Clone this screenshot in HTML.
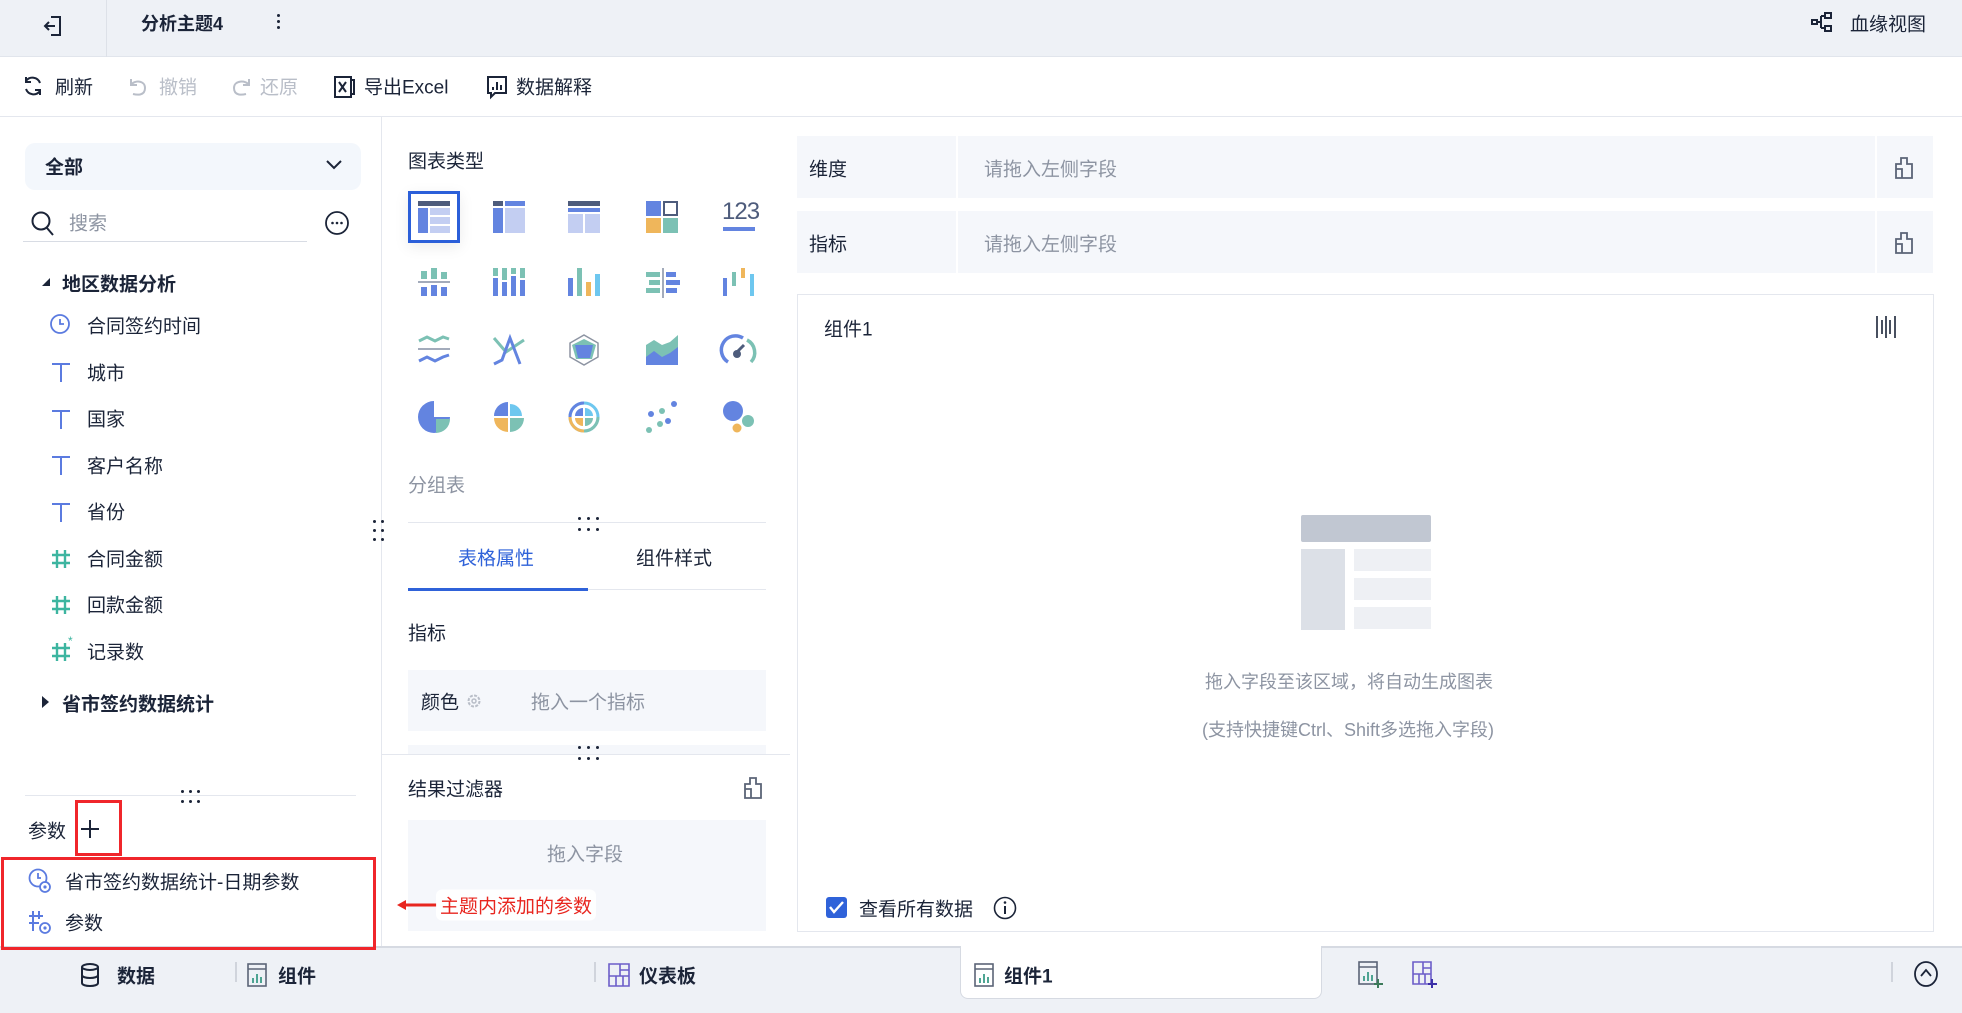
<!DOCTYPE html>
<html><head><meta charset="utf-8"><style>
*{margin:0;padding:0;box-sizing:border-box}
body{width:1962px;height:1013px;position:relative;overflow:hidden;background:#fff;font-family:"Liberation Sans","Noto Sans CJK SC",sans-serif;color:#1b2438;font-size:19px}
.a{position:absolute;white-space:nowrap}
.c{transform:translateY(-50%)}
svg{position:absolute;overflow:visible}
.g{color:#8d94a2}
</style></head><body>
<!-- top bar -->
<div class="a" style="left:0;top:0;width:1962px;height:57px;background:#eef1f6;border-bottom:1px solid #e1e5ec"></div>
<div class="a" style="left:106px;top:0;width:1px;height:57px;background:#dde1e8"></div>
<svg style="left:42px;top:14px" width="22" height="24" viewBox="0 0 22 24"><path d="M9 3h9v18H9M13 12H3M7 8l-4 4 4 4" fill="none" stroke="#1b2438" stroke-width="2"/></svg>
<div class="a c" style="left:141px;top:23px;font-weight:bold;font-size:18px">分析主题4</div>
<div class="a" style="left:277px;top:14px;width:3px;height:3px;background:#1b2438;border-radius:50%;box-shadow:0 6px 0 #1b2438,0 12px 0 #1b2438"></div>
<svg style="left:1811px;top:12px" width="22" height="20" viewBox="0 0 22 20"><rect x="1" y="8" width="5" height="4" fill="none" stroke="#1b2438" stroke-width="2"/><rect x="14" y="1" width="6" height="5" fill="none" stroke="#1b2438" stroke-width="2"/><rect x="14" y="14" width="6" height="5" fill="none" stroke="#1b2438" stroke-width="2"/><path d="M6 10h4M10 4v12M10 4h4M10 16h4" fill="none" stroke="#1b2438" stroke-width="2"/></svg>
<div class="a c" style="left:1850px;top:23px">血缘视图</div>
<!-- toolbar -->
<div class="a" style="left:0;top:116px;width:1962px;height:1px;background:#e4e7ee"></div>
<svg style="left:22px;top:75px" width="22" height="22" viewBox="0 0 22 22"><path d="M18 8a8 8 0 0 0-14-2M4 14a8 8 0 0 0 14 2M4 2v5h5M18 20v-5h-5" fill="none" stroke="#1b2438" stroke-width="2"/></svg>
<div class="a c" style="left:55px;top:86px">刷新</div>
<svg style="left:128px;top:76px" width="22" height="22" viewBox="0 0 22 22"><path d="M3 3v6h6M3 9c3-5 14-5 14 3s-8 7-12 6" fill="none" stroke="#b9bec8" stroke-width="2"/></svg>
<div class="a c g" style="left:159px;top:86px;color:#b9bec8">撤销</div>
<svg style="left:230px;top:76px" width="22" height="22" viewBox="0 0 22 22"><path d="M19 3v6h-6M19 9C16 4 4 4 4 12s8 7 12 6" fill="none" stroke="#b9bec8" stroke-width="2"/></svg>
<div class="a c" style="left:260px;top:86px;color:#b9bec8">还原</div>
<svg style="left:334px;top:75px" width="22" height="24" viewBox="0 0 22 24"><path d="M1 2h16v20H1zM17 5h3v14h-3M5 7l7 10M12 7l-7 10" fill="none" stroke="#1b2438" stroke-width="2"/></svg>
<div class="a c" style="left:364px;top:86px">导出Excel</div>
<svg style="left:486px;top:75px" width="22" height="24" viewBox="0 0 22 24"><path d="M2 2h18v16H9l-4 4v-4H2zM7 12v3M11 7v8M15 10v5" fill="none" stroke="#1b2438" stroke-width="2"/></svg>
<div class="a c" style="left:516px;top:86px">数据解释</div>
<!-- left panel -->
<div class="a" style="left:381px;top:117px;width:1px;height:829px;background:#e4e7ee"></div>
<div class="a" style="left:25px;top:143px;width:336px;height:47px;background:#f3f7fc;border-radius:10px"></div>
<div class="a c" style="left:45px;top:166px;font-weight:bold">全部</div>
<svg style="left:326px;top:160px" width="16" height="10" viewBox="0 0 16 10"><path d="M1 1l7 7 7-7" fill="none" stroke="#1b2438" stroke-width="2"/></svg>
<svg style="left:31px;top:211px" width="24" height="26" viewBox="0 0 24 26"><circle cx="10" cy="10" r="8.5" fill="none" stroke="#1b2438" stroke-width="2"/><path d="M16 17l6 7" stroke="#1b2438" stroke-width="2"/></svg>
<div class="a c g" style="left:69px;top:222px">搜索</div>
<div class="a" style="left:23px;top:241px;width:284px;height:1px;background:#d8dce4"></div>
<svg style="left:325px;top:211px" width="24" height="24" viewBox="0 0 24 24"><circle cx="12" cy="12" r="11" fill="none" stroke="#1b2438" stroke-width="1.8"/><circle cx="7.5" cy="12" r="1.3" fill="#1b2438"/><circle cx="12" cy="12" r="1.3" fill="#1b2438"/><circle cx="16.5" cy="12" r="1.3" fill="#1b2438"/></svg>
<svg style="left:41px;top:277px" width="10" height="10"><path d="M9 1v8H1z" fill="#1b2438"/></svg>
<div class="a c" style="left:62px;top:283px;font-weight:bold">地区数据分析</div>
<svg style="left:50px;top:314px" width="20" height="20" viewBox="0 0 20 20"><circle cx="10" cy="10" r="9" fill="none" stroke="#5b7be0" stroke-width="1.8"/><path d="M10 5v5h4" fill="none" stroke="#5b7be0" stroke-width="1.8"/></svg>
<div class="a c" style="left:87px;top:325px">合同签约时间</div>
<svg style="left:51px;top:362px;" width="20" height="20" viewBox="0 0 20 20"><path d="M1 2h18M10 2v18" stroke="#5b7be0" stroke-width="2"/></svg>
<div class="a c" style="left:87px;top:372px">城市</div>
<svg style="left:51px;top:409px;" width="20" height="20" viewBox="0 0 20 20"><path d="M1 2h18M10 2v18" stroke="#5b7be0" stroke-width="2"/></svg>
<div class="a c" style="left:87px;top:418px">国家</div>
<svg style="left:51px;top:455px;" width="20" height="20" viewBox="0 0 20 20"><path d="M1 2h18M10 2v18" stroke="#5b7be0" stroke-width="2"/></svg>
<div class="a c" style="left:87px;top:465px">客户名称</div>
<svg style="left:51px;top:502px;" width="20" height="20" viewBox="0 0 20 20"><path d="M1 2h18M10 2v18" stroke="#5b7be0" stroke-width="2"/></svg>
<div class="a c" style="left:87px;top:511px">省份</div>
<svg style="left:51px;top:549px" width="20" height="20" viewBox="0 0 20 20"><path d="M1 6h18M1 14h18M6 1v18M14 1v18" stroke="#3db5a0" stroke-width="2.4"/></svg>
<div class="a c" style="left:87px;top:558px">合同金额</div>
<svg style="left:51px;top:595px" width="20" height="20" viewBox="0 0 20 20"><path d="M1 6h18M1 14h18M6 1v18M14 1v18" stroke="#3db5a0" stroke-width="2.4"/></svg>
<div class="a c" style="left:87px;top:604px">回款金额</div>
<svg style="left:51px;top:642px" width="20" height="20" viewBox="0 0 20 20"><path d="M1 6h18M1 14h18M6 1v18M14 1v18" stroke="#3db5a0" stroke-width="2.4"/></svg>
<div class="a" style="left:68px;top:634px;font-size:12px;color:#3db5a0">*</div>
<div class="a c" style="left:87px;top:651px">记录数</div>
<svg style="left:41px;top:695px" width="10" height="14"><path d="M1 1l7 6-7 6z" fill="#1b2438"/></svg>
<div class="a c" style="left:62px;top:703px;font-weight:bold">省市签约数据统计</div>
<div class="a" style="left:25px;top:795px;width:331px;height:1px;background:#e4e7ee"></div>
<div class="a" style="left:181px;top:790px;width:3px;height:3px;background:#1b2438;border-radius:50%;box-shadow:8px 0 #1b2438,16px 0 #1b2438,0 10px #1b2438,8px 10px #1b2438,16px 10px #1b2438"></div>
<div class="a" style="left:373px;top:520px;width:3px;height:3px;background:#1b2438;border-radius:50%;box-shadow:8px 0 #1b2438,0 9px #1b2438,8px 9px #1b2438,0 18px #1b2438,8px 18px #1b2438"></div>
<div class="a c" style="left:28px;top:830px">参数</div>
<svg style="left:81px;top:820px" width="18" height="18"><path d="M9 0v18M0 9h18" stroke="#1b2438" stroke-width="2"/></svg>
<svg style="left:28px;top:868px" width="24" height="26" viewBox="0 0 24 26"><circle cx="10" cy="10" r="8.5" fill="none" stroke="#5b7be0" stroke-width="1.8"/><path d="M10 5v5h3" fill="none" stroke="#5b7be0" stroke-width="1.8"/><circle cx="17" cy="19" r="5" fill="#fff" stroke="#5b7be0" stroke-width="1.8"/><circle cx="17" cy="19" r="1.6" fill="#5b7be0"/></svg>
<div class="a c" style="left:65px;top:881px">省市签约数据统计-日期参数</div>
<svg style="left:28px;top:910px" width="24" height="26" viewBox="0 0 24 26"><path d="M1 6h14M1 13h10M5 1v20M11 1v8" stroke="#5b7be0" stroke-width="2"/><circle cx="17" cy="18" r="5" fill="#fff" stroke="#5b7be0" stroke-width="1.8"/><circle cx="17" cy="18" r="1.6" fill="#5b7be0"/></svg>
<div class="a c" style="left:65px;top:922px">参数</div>
<!-- middle panel -->
<div class="a c" style="left:408px;top:160px">图表类型</div>
<div class="a" style="left:408px;top:191px;width:52px;height:52px;border:3px solid #2b5fd9;box-shadow:0 4px 14px rgba(0,0,0,.08)"></div>
<svg style="left:418px;top:201px" width="32" height="32"><rect x="0" y="0" width="32" height="5" fill="#4e5c7c"/><rect x="0" y="7" width="10" height="25" fill="#6384e0"/><rect x="12" y="7" width="20" height="7" fill="#c3cef2"/><rect x="12" y="16" width="20" height="7" fill="#c3cef2"/><rect x="12" y="25" width="20" height="7" fill="#c3cef2"/></svg>
<svg style="left:493px;top:201px" width="32" height="32"><rect x="0" y="0" width="10" height="5" fill="#4e5c7c"/><rect x="12" y="0" width="20" height="5" fill="#6384e0"/><rect x="0" y="7" width="10" height="25" fill="#6384e0"/><rect x="12" y="7" width="20" height="25" fill="#c3cef2"/></svg>
<svg style="left:568px;top:201px" width="32" height="32"><rect x="0" y="0" width="32" height="5" fill="#4e5c7c"/><rect x="0" y="7" width="32" height="4" fill="#6384e0"/><rect x="0" y="13" width="15" height="19" fill="#c3cef2"/><rect x="17" y="13" width="15" height="19" fill="#c3cef2"/></svg>
<svg style="left:646px;top:201px" width="32" height="32"><rect x="0" y="0" width="15" height="15" fill="#6384e0"/><rect x="18" y="1" width="13" height="13" fill="#fff" stroke="#4e5c7c" stroke-width="2"/><rect x="0" y="17" width="15" height="15" fill="#efb65b"/><rect x="17" y="17" width="15" height="15" fill="#7cc1b4"/></svg>
<div class="a" style="left:722px;top:198px;font-size:24px;color:#4e5c7c;letter-spacing:-1px">123</div>
<div class="a" style="left:723px;top:227px;width:32px;height:4px;background:#6384e0"></div>
<svg style="left:418px;top:268px" width="32" height="30"><rect x="3" y="3" width="6" height="8" fill="#7cc1b4"/><rect x="13" y="0" width="6" height="11" fill="#7cc1b4"/><rect x="23" y="4" width="6" height="7" fill="#7cc1b4"/><rect x="0" y="13" width="32" height="2" fill="#a3abbb"/><rect x="3" y="19" width="6" height="9" fill="#6384e0"/><rect x="13" y="17" width="6" height="11" fill="#6384e0"/><rect x="23" y="19" width="6" height="9" fill="#6384e0"/></svg>
<svg style="left:493px;top:268px" width="32" height="30"><g fill="#7cc1b4"><rect x="0" y="0" width="5" height="8"/><rect x="9" y="0" width="5" height="12"/><rect x="18" y="0" width="5" height="6"/><rect x="27" y="0" width="5" height="10"/></g><g fill="#6384e0"><rect x="0" y="10" width="5" height="18"/><rect x="9" y="14" width="5" height="14"/><rect x="18" y="8" width="5" height="20"/><rect x="27" y="12" width="5" height="16"/></g></svg>
<svg style="left:568px;top:268px" width="32" height="30"><rect x="0" y="10" width="5" height="18" fill="#6384e0"/><rect x="9" y="0" width="5" height="28" fill="#7cc1b4"/><rect x="18" y="14" width="5" height="14" fill="#efb65b"/><rect x="27" y="6" width="5" height="22" fill="#6ec7ef"/></svg>
<svg style="left:646px;top:268px" width="32" height="30"><rect x="16" y="0" width="2" height="30" fill="#a3abbb"/><rect x="0" y="4" width="14" height="5" fill="#7cc1b4"/><rect x="20" y="4" width="10" height="5" fill="#6384e0"/><rect x="3" y="12" width="11" height="5" fill="#7cc1b4"/><rect x="20" y="12" width="14" height="5" fill="#6384e0"/><rect x="0" y="20" width="14" height="5" fill="#7cc1b4"/><rect x="20" y="20" width="11" height="5" fill="#6384e0"/></svg>
<svg style="left:723px;top:268px" width="32" height="30"><rect x="0" y="10" width="4" height="18" fill="#6384e0"/><rect x="9" y="4" width="4" height="14" fill="#7cc1b4"/><rect x="18" y="0" width="4" height="10" fill="#efb65b"/><rect x="27" y="6" width="4" height="22" fill="#6ec7ef"/></svg>
<svg style="left:418px;top:335px" width="32" height="30"><path d="M1 6l8-4 8 4 8-4 6 2" fill="none" stroke="#7cc1b4" stroke-width="3"/><path d="M0 14h32" stroke="#a3abbb" stroke-width="2"/><path d="M1 26l8-4 8 4 8-4 6 -2" fill="none" stroke="#6384e0" stroke-width="3"/></svg>
<svg style="left:493px;top:335px" width="32" height="30"><path d="M1 3l12 14 6-4 12-8" fill="none" stroke="#7cc1b4" stroke-width="3"/><path d="M1 29l8-4 8-22 10 26" fill="none" stroke="#6384e0" stroke-width="3"/></svg>
<svg style="left:568px;top:334px" width="32" height="32"><path d="M16 1l14 8v14l-14 8-14-8V9z" fill="none" stroke="#8d94a2" stroke-width="1.5"/><path d="M16 5l12 6-4 14h-16l-4-14z" fill="#7cc1b4"/><path d="M7 11l18 0-3 13h-12z" fill="#6384e0"/></svg>
<svg style="left:646px;top:335px" width="32" height="30"><path d="M0 10l8-5 8 5 8-3 8-7v30H0z" fill="#7cc1b4"/><path d="M0 22l8-6 8 6 8-4 8-6v18H0z" fill="#6384e0"/></svg>
<svg style="left:723px;top:335px" width="32" height="30"><path d="M5 27A14 14 0 0 1 20 3" fill="none" stroke="#6384e0" stroke-width="3.5"/><path d="M24 5a14 14 0 0 1 4 22" fill="none" stroke="#7cc1b4" stroke-width="3.5"/><circle cx="14" cy="19" r="4" fill="#4e5c7c"/><path d="M13 18l8-8" stroke="#4e5c7c" stroke-width="3"/></svg>
<svg style="left:418px;top:401px" width="32" height="32"><path d="M16 16V0a16 16 0 1 0 16 16z" fill="#6384e0"/><path d="M18 18h14a14 14 0 0 1-14 14z" fill="#7cc1b4"/></svg>
<svg style="left:493px;top:401px" width="32" height="32"><path d="M15 15V1A14 14 0 0 0 1 15z" fill="#6384e0"/><path d="M17 15V3a12 12 0 0 1 12 12z" fill="#6ec7ef"/><path d="M15 17H1a14 14 0 0 0 14 14z" fill="#efb65b"/><path d="M17 17h14a14 14 0 0 1-14 14z" fill="#7cc1b4"/></svg>
<svg style="left:568px;top:401px" width="32" height="32"><circle cx="16" cy="16" r="14" fill="none" stroke="#6ec7ef" stroke-width="3"/><path d="M16 2a14 14 0 0 0-14 14" fill="none" stroke="#6384e0" stroke-width="3"/><path d="M2 16a14 14 0 0 0 14 14" fill="none" stroke="#efb65b" stroke-width="3"/><path d="M16 30a14 14 0 0 0 14-14" fill="none" stroke="#7cc1b4" stroke-width="3"/><path d="M15 15V7a8 8 0 0 0-8 8z" fill="#6384e0"/><path d="M17 15V7a8 8 0 0 1 8 8z" fill="#6ec7ef"/><path d="M15 17H7a8 8 0 0 0 8 8z" fill="#efb65b"/><path d="M17 17h8a8 8 0 0 1-8 8z" fill="#7cc1b4"/></svg>
<svg style="left:646px;top:401px" width="32" height="32"><g fill="#6384e0"><circle cx="28" cy="3" r="3"/><circle cx="5" cy="13" r="3"/><circle cx="22" cy="20" r="3"/></g><g fill="#7cc1b4"><circle cx="16" cy="10" r="3"/><circle cx="14" cy="23" r="3"/><circle cx="3" cy="29" r="3"/></g></svg>
<svg style="left:723px;top:401px" width="32" height="32"><circle cx="10" cy="10" r="10" fill="#6384e0"/><circle cx="25" cy="20" r="6" fill="#7cc1b4"/><circle cx="14" cy="27" r="4.5" fill="#efb65b"/></svg>
<div class="a c" style="left:408px;top:484px;color:#8d94a2">分组表</div>
<div class="a" style="left:408px;top:522px;width:358px;height:1px;background:#e4e7ee"></div>
<div class="a" style="left:578px;top:517px;width:3px;height:3px;background:#1b2438;border-radius:50%;box-shadow:9px 0 #1b2438,18px 0 #1b2438,0 11px #1b2438,9px 11px #1b2438,18px 11px #1b2438"></div>
<div class="a c" style="left:458px;top:557px;color:#2f62d9">表格属性</div>
<div class="a c" style="left:636px;top:557px">组件样式</div>
<div class="a" style="left:408px;top:589px;width:358px;height:1px;background:#e4e7ee"></div>
<div class="a" style="left:408px;top:588px;width:180px;height:3px;background:#2f62d9"></div>
<div class="a c" style="left:408px;top:632px">指标</div>
<div class="a" style="left:408px;top:670px;width:358px;height:61px;background:#f5f7fb"></div>
<div class="a c" style="left:421px;top:701px">颜色</div>
<svg style="left:466px;top:693px" width="16" height="16" viewBox="0 0 16 16"><circle cx="8" cy="8" r="5.5" fill="none" stroke="#b9bec8" stroke-width="2" stroke-dasharray="3 1.3"/><circle cx="8" cy="8" r="2" fill="none" stroke="#b9bec8" stroke-width="1.5"/></svg>
<div class="a c g" style="left:531px;top:701px">拖入一个指标</div>
<div class="a" style="left:408px;top:745px;width:358px;height:9px;background:#f5f7fb"></div>
<div class="a" style="left:382px;top:754px;width:408px;height:1px;background:#e4e7ee"></div>
<div class="a" style="left:578px;top:746px;width:3px;height:3px;background:#1b2438;border-radius:50%;box-shadow:9px 0 #1b2438,18px 0 #1b2438,0 11px #1b2438,9px 11px #1b2438,18px 11px #1b2438"></div>
<div class="a c" style="left:408px;top:788px">结果过滤器</div>
<svg style="left:744px;top:777px" width="18" height="22" viewBox="0 0 18 22"><path d="M6 1h6v6h5v14H1V7h5zM1 12h6v9" fill="none" stroke="#5b6477" stroke-width="1.8"/></svg>
<div class="a" style="left:408px;top:820px;width:358px;height:111px;background:#f5f7fb"></div>
<div class="a c g" style="left:547px;top:853px">拖入字段</div>
<!-- annotation -->
<svg style="left:397px;top:899px" width="42" height="12"><path d="M40 6H6" stroke="#e8261f" stroke-width="3"/><path d="M0 6l9-5v10z" fill="#e8261f"/></svg>
<div class="a c" style="left:436px;top:905px;color:#e8261f;background:rgba(255,255,255,.9);padding:2px 4px;border-radius:6px">主题内添加的参数</div>
<!-- right -->
<div class="a" style="left:797px;top:136px;width:1136px;height:62px;background:#f5f7fb"></div>
<div class="a" style="left:956px;top:136px;width:2px;height:62px;background:#fff"></div>
<div class="a" style="left:1875px;top:136px;width:2px;height:62px;background:#fff"></div>
<div class="a c" style="left:809px;top:168px">维度</div>
<div class="a c g" style="left:984px;top:168px">请拖入左侧字段</div>
<svg style="left:1895px;top:157px" width="18" height="22" viewBox="0 0 18 22"><path d="M6 1h6v6h5v14H1V7h5zM1 12h6v9" fill="none" stroke="#5b6477" stroke-width="1.8"/></svg>
<div class="a" style="left:797px;top:211px;width:1136px;height:62px;background:#f5f7fb"></div>
<div class="a" style="left:956px;top:211px;width:2px;height:62px;background:#fff"></div>
<div class="a" style="left:1875px;top:211px;width:2px;height:62px;background:#fff"></div>
<div class="a c" style="left:809px;top:243px">指标</div>
<div class="a c g" style="left:984px;top:243px">请拖入左侧字段</div>
<svg style="left:1895px;top:232px" width="18" height="22" viewBox="0 0 18 22"><path d="M6 1h6v6h5v14H1V7h5zM1 12h6v9" fill="none" stroke="#5b6477" stroke-width="1.8"/></svg>
<div class="a" style="left:797px;top:294px;width:1137px;height:638px;border:1px solid #e4e7ee"></div>
<div class="a c" style="left:824px;top:328px">组件1</div>
<svg style="left:1876px;top:316px" width="22" height="22"><path d="M1 0v22M6 4v14M10 0v22M14 4v14M19 0v22" stroke="#1b2438" stroke-width="1.6"/></svg>
<div class="a" style="left:1301px;top:515px;width:130px;height:27px;background:#c1c7d2;border-radius:2px"></div>
<div class="a" style="left:1301px;top:549px;width:44px;height:81px;background:#dce0e7"></div>
<div class="a" style="left:1354px;top:549px;width:77px;height:22px;background:#eef0f4"></div>
<div class="a" style="left:1354px;top:578px;width:77px;height:22px;background:#eef0f4"></div>
<div class="a" style="left:1354px;top:607px;width:77px;height:22px;background:#eef0f4"></div>
<div class="a c g" style="left:1205px;top:681px;font-size:18px">拖入字段至该区域，将自动生成图表</div>
<div class="a c g" style="left:1202px;top:729px;font-size:18px">(支持快捷键Ctrl、Shift多选拖入字段)</div>
<div class="a" style="left:826px;top:897px;width:21px;height:21px;background:#2f62d9;border-radius:3px"></div>
<svg style="left:829px;top:901px" width="15" height="13"><path d="M1 6l4 5 9-10" fill="none" stroke="#fff" stroke-width="2.4"/></svg>
<div class="a c" style="left:859px;top:908px">查看所有数据</div>
<svg style="left:993px;top:896px" width="24" height="24"><circle cx="12" cy="12" r="10.5" fill="none" stroke="#1b2438" stroke-width="1.6"/><path d="M12 10v8" stroke="#1b2438" stroke-width="2"/><circle cx="12" cy="6.5" r="1.3" fill="#1b2438"/></svg>
<!-- bottom bar -->
<div class="a" style="left:0;top:946px;width:1962px;height:67px;background:#eef1f6;border-top:2px solid #d6dae2"></div>
<div class="a" style="left:960px;top:946px;width:362px;height:53px;background:#fff;border:1px solid #d6dae2;border-top:none;border-radius:0 0 8px 8px"></div>
<svg style="left:80px;top:963px" width="20" height="24" viewBox="0 0 20 24"><ellipse cx="10" cy="4" rx="8" ry="3" fill="none" stroke="#1b2438" stroke-width="2"/><path d="M2 4v16c0 4 16 4 16 0V4M2 12c0 4 16 4 16 0" fill="none" stroke="#1b2438" stroke-width="2"/></svg>
<div class="a c" style="left:117px;top:975px;font-weight:bold">数据</div>
<div class="a" style="left:235px;top:962px;width:2px;height:20px;background:#d0d4dc"></div>
<svg style="left:247px;top:963px" width="20" height="24" viewBox="0 0 20 24"><rect x="1" y="1" width="18" height="22" fill="none" stroke="#5b6477" stroke-width="1.6"/><path d="M1 6h18" stroke="#5b6477" stroke-width="1.6"/><path d="M6 20v-5M10 20v-9M14 20v-6" stroke="#3c9c88" stroke-width="1.8"/></svg>
<div class="a c" style="left:278px;top:975px;font-weight:bold">组件</div>
<div class="a" style="left:594px;top:962px;width:2px;height:20px;background:#d0d4dc"></div>
<svg style="left:608px;top:963px" width="22" height="24" viewBox="0 0 22 24"><path d="M1 1h20v22H1zM12 1v12M1 13h20M8 13v10M15 13v10M12 7h9" fill="none" stroke="#6c5ec9" stroke-width="1.6"/></svg>
<div class="a c" style="left:639px;top:975px;font-weight:bold">仪表板</div>
<svg style="left:974px;top:963px" width="20" height="24" viewBox="0 0 20 24"><rect x="1" y="1" width="18" height="22" fill="none" stroke="#5b6477" stroke-width="1.6"/><path d="M1 6h18" stroke="#5b6477" stroke-width="1.6"/><path d="M6 20v-5M10 20v-9M14 20v-6" stroke="#3c9c88" stroke-width="1.8"/></svg>
<div class="a c" style="left:1004px;top:975px;font-weight:bold">组件1</div>
<svg style="left:1358px;top:961px" width="26" height="28" viewBox="0 0 26 28"><rect x="1" y="1" width="18" height="22" fill="none" stroke="#5b6477" stroke-width="1.6"/><path d="M1 6h18" stroke="#5b6477" stroke-width="1.6"/><path d="M6 20v-5M10 20v-9M14 20v-6" stroke="#3c9c88" stroke-width="1.8"/><path d="M20 18v9M16 23h9" stroke="#3c7a5a" stroke-width="2"/></svg>
<svg style="left:1412px;top:961px" width="26" height="28" viewBox="0 0 26 28"><path d="M1 1h18v22H1zM11 1v12M1 13h18M7 13v10M13 13v10M11 7h8" fill="none" stroke="#6c5ec9" stroke-width="1.6"/><path d="M20 18v9M16 23h9" stroke="#3b2fa8" stroke-width="2"/></svg>
<div class="a" style="left:1891px;top:962px;width:2px;height:20px;background:#d0d4dc"></div>
<svg style="left:1914px;top:961px" width="24" height="26"><ellipse cx="12" cy="13" rx="11" ry="12" fill="none" stroke="#1b2438" stroke-width="1.8"/><path d="M7 15l5-6 5 6" fill="none" stroke="#1b2438" stroke-width="1.8"/></svg>
<!-- red annotation boxes on top -->
<div class="a" style="left:75px;top:800px;width:47px;height:56px;border:3px solid #f0262b;z-index:5"></div>
<div class="a" style="left:1px;top:857px;width:375px;height:93px;border:3px solid #f0262b;z-index:5"></div>
</body></html>
